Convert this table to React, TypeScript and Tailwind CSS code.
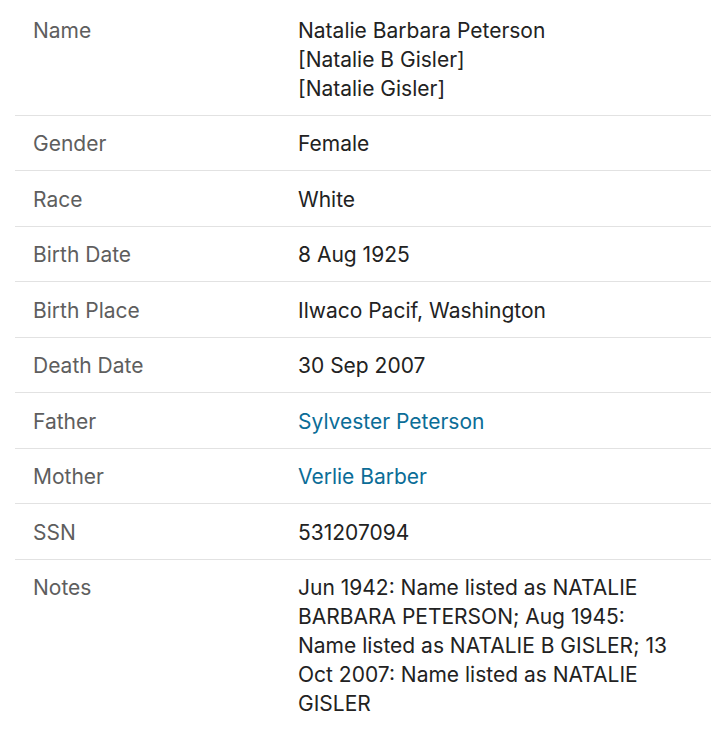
import React from "react";

type Row = { label: string; value: React.ReactNode };

const rows: Row[] = [
  {
    label: "Name",
    value: (
      <>
        <div>Natalie Barbara Peterson</div>
        <div>[Natalie B Gisler]</div>
        <div>[Natalie Gisler]</div>
      </>
    ),
  },
  { label: "Gender", value: "Female" },
  { label: "Race", value: "White" },
  { label: "Birth Date", value: "8 Aug 1925" },
  { label: "Birth Place", value: "Ilwaco Pacif, Washington" },
  { label: "Death Date", value: "30 Sep 2007" },
  { label: "Father", value: <a className="text-[#0b6d97]">Sylvester Peterson</a> },
  { label: "Mother", value: <a className="text-[#0b6d97]">Verlie Barber</a> },
  { label: "SSN", value: "531207094" },
  {
    label: "Notes",
    value:
      "Jun 1942: Name listed as NATALIE BARBARA PETERSON; Aug 1945: Name listed as NATALIE B GISLER; 13 Oct 2007: Name listed as NATALIE GISLER",
  },
];

export default function App() {
  return (
    <div
      className="min-h-[729px] w-[717px] bg-white pt-[2px]"
      style={{ fontFamily: "Inter, 'Noto Sans', sans-serif" }}
    >
      <div className="ml-[15px] w-[696px]">
        {rows.map((r, i) => (
          <div
            key={r.label}
            className={`flex pt-[13.5px] pb-[12px] text-[21px] leading-[29px] ${
              i < rows.length - 1 ? "border-b border-[#e2e2e2]" : ""
            }`}
          >
            <div className="w-[283px] shrink-0 pl-[18px] text-[#5e5e5e]">{r.label}</div>
            <div className="w-[380px] text-[#222222]">{r.value}</div>
          </div>
        ))}
      </div>
    </div>
  );
}
